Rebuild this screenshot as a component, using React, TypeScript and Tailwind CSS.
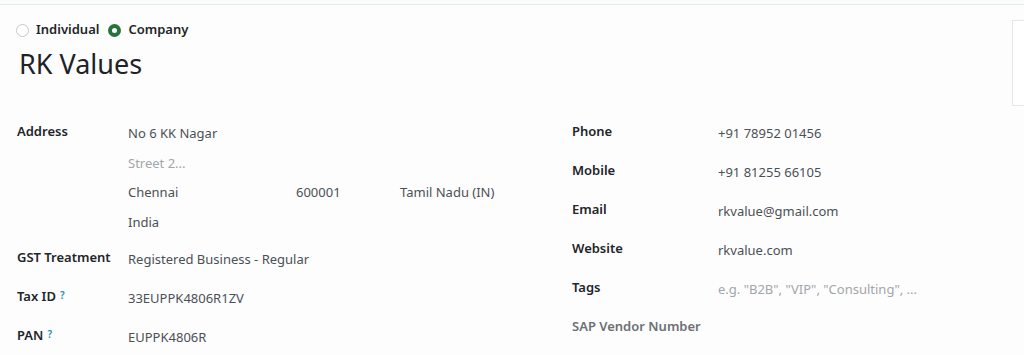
import React from "react";

const font = { fontFamily: '"Noto Sans", "Open Sans", sans-serif' };

function Radio({ checked, label }: { checked?: boolean; label: string }) {
  return (
    <label className="flex items-center gap-[7px]">
      {checked ? (
        <span className="w-[13px] h-[13px] rounded-full bg-[#24753a] flex items-center justify-center">
          <span className="w-[5px] h-[5px] rounded-full bg-white" />
        </span>
      ) : (
        <span className="w-[13px] h-[13px] rounded-full border border-[#c4c8cc] bg-white" />
      )}
      <span className="text-[13px] font-semibold text-[#212529]">{label}</span>
    </label>
  );
}

function Label({ children, muted }: { children: React.ReactNode; muted?: boolean }) {
  return (
    <div
      className={`h-[20px] leading-[20px] text-[13px] font-semibold ${
        muted ? "text-[#6c7075]" : "text-[#212529]"
      }`}
    >
      {children}
    </div>
  );
}

function Help() {
  return <sup className="text-[10px] font-semibold text-[#1a8fb5] ml-[4px] relative -top-[2px]">?</sup>;
}

function Value({ children, placeholder }: { children: React.ReactNode; placeholder?: boolean }) {
  return (
    <div
      className={`pt-[2px] h-[22px] leading-[20px] text-[13px] ${
        placeholder ? "text-[#a2a6aa]" : "text-[#4b5056]"
      }`}
    >
      {children}
    </div>
  );
}

function Row({ label, children }: { label: React.ReactNode; children?: React.ReactNode }) {
  return (
    <div className="flex h-[39px]">
      <div className="shrink-0 w-[var(--lw)]">{label}</div>
      <div className="flex-1">{children}</div>
    </div>
  );
}

export default function App() {
  return (
    <div className="w-[1024px] h-[355px] overflow-hidden bg-[#fdfdfd]" style={font}>
      <div className="h-[4px] bg-[#fafbfb]" />
      <div className="border-t border-[#e3eaed]">
        <div className="flex">
          <div className="flex-1 pl-[16px] pt-[15px]">
            <div className="flex items-center gap-[9px] h-[20px]">
              <Radio label="Individual" />
              <Radio checked label="Company" />
            </div>
            <h1 className="mt-[7px] ml-[3px] text-[27px] leading-[34px] text-[#1f2226]">RK Values</h1>
          </div>
          <div className="mt-[15px] w-[12px] h-[86px] border-l border-t border-b border-[#e6e6e6] bg-white" />
        </div>

        <div className="flex mt-[15px]">
          {/* left column */}
          <div className="w-[572px] pl-[17px] shrink-0 [--lw:111px]">
            <div className="flex">
              <div className="w-[111px] shrink-0">
                <Label>Address</Label>
              </div>
              <div className="flex-1">
                <div className="h-[29.5px]">
                  <Value>No 6 KK Nagar</Value>
                </div>
                <div className="h-[29.5px]">
                  <Value placeholder>Street 2...</Value>
                </div>
                <div className="h-[29.5px] flex">
                  <div className="w-[168px]">
                    <Value>Chennai</Value>
                  </div>
                  <div className="w-[104px]">
                    <Value>600001</Value>
                  </div>
                  <Value>Tamil Nadu (IN)</Value>
                </div>
                <div className="h-[29.5px]">
                  <Value>India</Value>
                </div>
              </div>
            </div>
            <div className="mt-[8px]">
              <Row label={<Label>GST Treatment</Label>}>
                <Value>Registered Business - Regular</Value>
              </Row>
              <Row
                label={
                  <Label>
                    Tax ID
                    <Help />
                  </Label>
                }
              >
                <Value>33EUPPK4806R1ZV</Value>
              </Row>
              <Row
                label={
                  <Label>
                    PAN
                    <Help />
                  </Label>
                }
              >
                <Value>EUPPK4806R</Value>
              </Row>
            </div>
          </div>

          {/* right column */}
          <div className="flex-1 [--lw:146px]">
            <Row label={<Label>Phone</Label>}>
              <Value>+91 78952 01456</Value>
            </Row>
            <Row label={<Label>Mobile</Label>}>
              <Value>+91 81255 66105</Value>
            </Row>
            <Row label={<Label>Email</Label>}>
              <Value>rkvalue@gmail.com</Value>
            </Row>
            <Row label={<Label>Website</Label>}>
              <Value>rkvalue.com</Value>
            </Row>
            <Row label={<Label>Tags</Label>}>
              <Value placeholder>e.g. "B2B", "VIP", "Consulting", ...</Value>
            </Row>
            <Row label={<Label muted>SAP Vendor Number</Label>} />
          </div>
        </div>
      </div>
    </div>
  );
}
